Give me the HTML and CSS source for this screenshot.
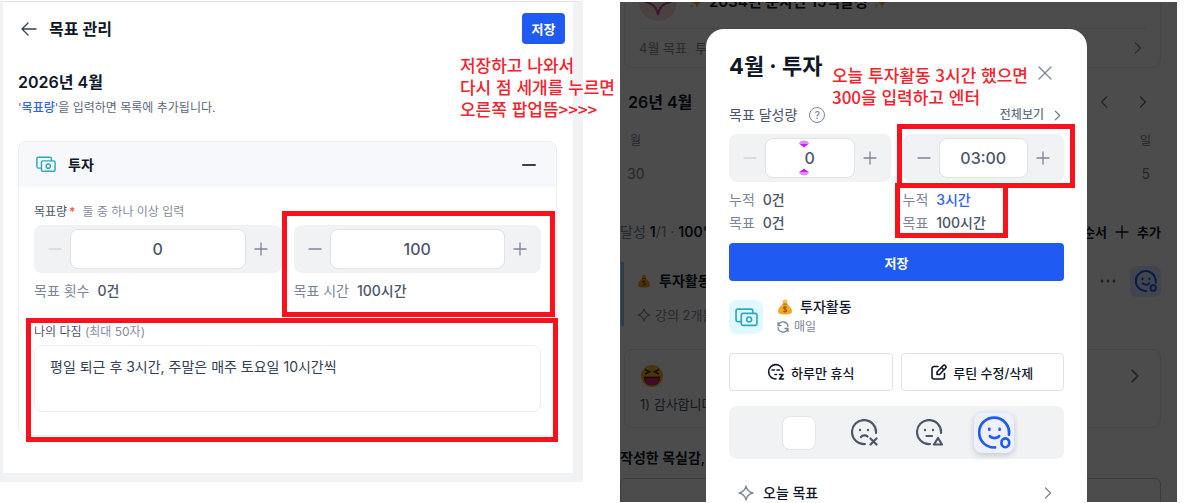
FILE: index.html
```html
<!DOCTYPE html>
<html lang="ko">
<head>
  <meta charset="UTF-8">
  <meta name="viewport" content="width=device-width, initial-scale=1.0">
  <title>목표 관리</title>
  <link rel="stylesheet" href="styles.css">
</head>
<body>
  <!-- shared icons -->
  <svg class="sprite" aria-hidden="true">
    <symbol id="i-minus" viewBox="0 0 14 14"><path d="M1 7h12"/></symbol>
    <symbol id="i-plus" viewBox="0 0 14 14"><path d="M1 7h12M7 1v12"/></symbol>
    <symbol id="i-next" viewBox="0 0 8 12"><path d="M1.500 1l5 5-5 5"/></symbol>
    <symbol id="i-prev" viewBox="0 0 8 12"><path d="M6.500 1l-5 5 5 5"/></symbol>
    <symbol id="i-money" viewBox="0 0 22 18">
      <path d="M6 13H2.500A1.500 1.500 0 0 1 1 11.500v-9A1.500 1.500 0 0 1 2.500 1h13A1.500 1.500 0 0 1 17 2.500V5"/>
      <rect x="6" y="5" width="15" height="11.500" rx="1.500"/>
      <circle cx="13.500" cy="10.800" r="2.300"/>
    </symbol>
    <symbol id="i-star" viewBox="0 0 16 16"><path d="M8 1c.8 4 3 6.200 7 7-4 .8-6.200 3-7 7-.8-4-3-6.200-7-7 4-.8 6.200-3 7-7z"/></symbol>
    <symbol id="i-good" viewBox="0 0 32 32">
      <path d="M30 18A14.500 14.500 0 1 0 16.500 30.500"/>
      <path d="M11.500 19.500c1 2.500 8 2.500 9 0"/>
      <path d="M11 12.500v.8M21 12.500v.8"/>
      <ellipse cx="26.500" cy="26" rx="3.800" ry="4.300"/>
    </symbol>
    <symbol id="i-bag" viewBox="0 0 16 16">
      <path fill="#f5a623" d="M6 5h4c3 2 5 5 5 7.500 0 2-2 3-7 3s-7-1-7-3C1 10 3 7 6 5z"/>
      <path fill="#f7bd4a" d="M5.500 1.500L8 .5l2.500 1L10 5H6z"/>
      <path fill="none" stroke="#a35a16" stroke-width="1.200" d="M5.800 5h4.400M9.800 8.500C8 7.300 6.300 8 6.500 9.200s3.200 1 3.200 2.400-2.200 1.700-3.500.6M8 7v6.500"/>
    </symbol>
    <symbol id="i-spark" viewBox="0 0 14 14">
      <path fill="#f5a623" d="M8 1c.5 3.500 2 5.500 5 6-3 .5-4.500 2.500-5 6-.5-3.500-2-5.500-5-6 3-.5 4.500-2.500 5-6zM2.500 1l.6 1.600 1.400.6-1.400.6-.6 1.600-.6-1.600L.5 3.200l1.400-.6zM2.500 9l.5 1.400 1.300.6-1.300.5-.5 1.500-.5-1.500L.7 11l1.300-.6z"/>
    </symbol>
  </svg>

  <main class="guide">
    <section class="panel">
      <header class="panel-head">
        <button class="icon-btn" aria-label="뒤로">
          <svg class="icon dark" width="16" height="14" viewBox="0 0 16 14"><path d="M15 7H1M7 1L1 7l6 6"/></svg>
        </button>
        <h1>목표 관리</h1>
        <button class="save-small">저장</button>
      </header>

      <div class="panel-body">
        <h2>2026년 4월</h2>
        <p class="desc">'<span>목표량</span>'을 입력하면 목록에 추가됩니다.</p>

        <div class="card">
          <div class="card-head">
            <svg class="icon teal" width="20" height="17"><use href="#i-money"/></svg>
            <h3>투자</h3>
            <button class="icon-btn" aria-label="접기"><svg class="icon dark bold" width="14" height="14"><use href="#i-minus"/></svg></button>
          </div>
          <div class="card-body">
            <p class="label">목표량<b>*</b> <span class="hint">둘 중 하나 이상 입력</span></p>
            <div class="fields">
              <div class="field">
                <div class="stepper">
                  <button aria-label="횟수 감소" disabled><svg class="icon" width="14" height="14"><use href="#i-minus"/></svg></button>
                  <input type="text" aria-label="목표 횟수" value="0">
                  <button aria-label="횟수 증가"><svg class="icon" width="14" height="14"><use href="#i-plus"/></svg></button>
                </div>
                <p class="total">목표 횟수 <strong>0건</strong></p>
              </div>
              <div class="field">
                <div class="stepper">
                  <button aria-label="시간 감소"><svg class="icon" width="14" height="14"><use href="#i-minus"/></svg></button>
                  <input type="text" aria-label="목표 시간" value="100">
                  <button aria-label="시간 증가"><svg class="icon" width="14" height="14"><use href="#i-plus"/></svg></button>
                </div>
                <p class="total">목표 시간 <strong>100시간</strong></p>
                <div class="mark mark-goal"></div>
              </div>
            </div>
            <div class="pledge">
              <label class="label" for="pledge">나의 다짐 <span>(최대 50자)</span></label>
              <textarea id="pledge" maxlength="50">평일 퇴근 후 3시간, 주말은 매주 토요일 10시간씩</textarea>
              <div class="mark mark-pledge"></div>
            </div>
          </div>
        </div>
      </div>
      <p class="note note-save">저장하고 나와서<br>다시 점 세개를 누르면<br>오른쪽 팝업뜸&gt;&gt;&gt;&gt;</p>
    </section>

    <section class="phone">
      <div class="screen">
        <div class="top-card">
          <div class="top-title">
            <span class="badge"><svg class="icon" width="28" height="28"><use href="#i-star"/></svg></span>
            <svg width="14" height="14"><use href="#i-spark"/></svg>
            <strong>2034년 순자산 15억달성</strong>
            <svg width="14" height="14"><use href="#i-spark"/></svg>
          </div>
          <div class="top-goal">
            <span>4월 목표</span><span>투자</span>
            <svg class="icon" width="8" height="12"><use href="#i-next"/></svg>
          </div>
        </div>
        <div class="month">
          <strong>26년 4월</strong>
          <svg class="icon" width="8" height="12"><use href="#i-prev"/></svg>
          <svg class="icon" width="8" height="12"><use href="#i-next"/></svg>
        </div>
        <div class="week"><span>월</span><span>일</span></div>
        <div class="week days"><span>30</span><span>5</span></div>
        <div class="summary">
          <span>달성 <b>1</b>/1 · <b>100%</b></span>
          <span class="tools"><b>순서</b><svg class="icon" width="14" height="14"><use href="#i-plus"/></svg><b>추가</b></span>
        </div>
        <div class="routine">
          <div class="routine-name">
            <svg width="14" height="14"><use href="#i-bag"/></svg>
            <strong>투자활동</strong>
            <svg class="dots" width="16" height="4" viewBox="0 0 16 4"><circle cx="2" cy="2" r="1.500"/><circle cx="8" cy="2" r="1.500"/><circle cx="14" cy="2" r="1.500"/></svg>
            <span class="done"><svg class="icon" width="22" height="22"><use href="#i-good"/></svg></span>
          </div>
          <p><svg class="icon" width="14" height="14"><use href="#i-star"/></svg>강의 2개듣기</p>
        </div>
        <div class="diary">
          <div class="diary-head">
            <svg width="24" height="24" viewBox="0 0 24 24">
              <circle cx="12" cy="12" r="11" fill="#f9b52b"/>
              <path fill="#7a2d12" d="M3.500 12.500h17c0 5-3.500 9-8.500 9s-8.500-4-8.500-9z"/>
              <path fill="#e0218a" d="M4.500 14.500h15c-1 4-4 6.500-7.500 6.500s-6.500-2.500-7.500-6.500z"/>
              <path fill="none" stroke="#5c2a10" stroke-width="1.800" d="M5 5.500l4.500 2.300L5 10M19 5.500l-4.500 2.300L19 10"/>
            </svg>
            <svg class="icon" width="10" height="14" viewBox="0 0 8 12"><use href="#i-next"/></svg>
          </div>
          <p>1) 감사합니다</p>
        </div>
        <strong class="list-title">작성한 목실감,</strong>
        <div class="list"></div>
      </div>

      <div class="overlay">
        <div class="modal" role="dialog" aria-label="4월 투자">
          <header class="modal-head">
            <h2>4월 · 투자</h2>
            <button class="icon-btn" aria-label="닫기"><svg class="icon" width="16" height="16" viewBox="0 0 16 16"><path d="M2 2l12 12M14 2L2 14"/></svg></button>
            <p class="note note-enter">오늘 투자활동 3시간 했으면<br>300을 입력하고 엔터</p>
          </header>
          <div class="modal-sub">
            <span class="sub-title">목표 달성량</span>
            <button class="help" aria-label="도움말">?</button>
            <a class="all" href="#">전체보기 <svg class="icon" width="7" height="11"><use href="#i-next"/></svg></a>
          </div>
          <div class="fields">
            <div class="field">
              <div class="stepper">
                <button aria-label="건수 감소" disabled><svg class="icon" width="14" height="14"><use href="#i-minus"/></svg></button>
                <input type="text" aria-label="건수" value="0">
                <button aria-label="건수 증가"><svg class="icon" width="14" height="14"><use href="#i-plus"/></svg></button>
                <svg class="handles" width="10" height="36" viewBox="0 0 10 36">
                  <path fill="#e08bff" d="M0 4a5 3.500 0 0 1 10 0L5 7z"/><path fill="#c81cf5" d="M1 4h8L5 7.500z"/>
                  <path fill="#e08bff" d="M0 32a5 3.500 0 0 0 10 0L5 29z"/><path fill="#c81cf5" d="M1 32h8L5 28.500z"/>
                </svg>
              </div>
              <div class="totals">
                <p class="total">누적 <strong>0건</strong></p>
                <p class="total">목표 <strong>0건</strong></p>
              </div>
            </div>
            <div class="field">
              <div class="stepper">
                <button aria-label="시간 감소"><svg class="icon" width="14" height="14"><use href="#i-minus"/></svg></button>
                <input type="text" aria-label="시간" value="03:00">
                <button aria-label="시간 증가"><svg class="icon" width="14" height="14"><use href="#i-plus"/></svg></button>
                <div class="mark mark-time"></div>
              </div>
              <div class="totals">
                <p class="total">누적 <strong class="blue">3시간</strong></p>
                <p class="total">목표 <strong>100시간</strong></p>
                <div class="mark mark-total"></div>
              </div>
            </div>
          </div>
          <button class="save">저장</button>

          <div class="activity">
            <span class="activity-icon"><svg class="icon teal" width="23" height="19"><use href="#i-money"/></svg></span>
            <div>
              <p class="activity-name"><svg width="16" height="16"><use href="#i-bag"/></svg>투자활동</p>
              <p class="repeat">
                <svg class="icon" width="12" height="12" viewBox="0 0 12 12"><path d="M1 4.500h3M1 1.500v3M1.300 4.300A5 5 0 0 1 11 5.500M11 7.500H8M11 10.500v-3M10.700 7.700A5 5 0 0 1 1 6.500"/></svg>매일
              </p>
            </div>
          </div>

          <div class="actions">
            <button>
              <svg class="icon" width="18" height="18" viewBox="0 0 18 18"><path d="M16 8A7.200 7.200 0 1 0 9 16M5 7h2.500M10 7h2.500M8 11.500h1.500M12.500 11.500H16l-3.500 4.500h4"/></svg>하루만 휴식
            </button>
            <button>
              <svg class="icon" width="16" height="16" viewBox="0 0 16 16"><path d="M7 2.500H3A2 2 0 0 0 1 4.500v8.500a2 2 0 0 0 2 2h8.500a2 2 0 0 0 2-2V9.500M6 10.500V8l6-6.200a1.600 1.600 0 0 1 2.500 2.400L8.500 10.500zM10.500 3.500L13 6"/></svg>루틴 수정/삭제
            </button>
          </div>

          <div class="moods">
            <button class="mood" aria-label="선택 안함"><span class="blank"></span></button>
            <button class="mood" aria-label="못함">
              <svg class="icon" width="27" height="27" viewBox="0 0 27 27"><path d="M25 14A12 12 0 1 0 14 25M10 18c1.500-2 5-2 6.500-.5M9 10.800v.4M17 10.800v.4M19.500 19.500l6 6M25.500 19.500l-6 6"/></svg>
            </button>
            <button class="mood" aria-label="조금 함">
              <svg class="icon" width="27" height="27" viewBox="0 0 27 27"><path d="M25 14A12 12 0 1 0 14 25M10.500 17h5.500M9 10.800v.4M17 10.800v.4M22 19l-4 6.500h8z"/></svg>
            </button>
            <button class="mood selected" aria-label="완료"><svg class="icon" width="33" height="33"><use href="#i-good"/></svg></button>
          </div>

          <div class="today">
            <svg class="icon" width="16" height="16"><use href="#i-star"/></svg>
            <strong>오늘 목표</strong>
            <svg class="icon" width="8" height="12"><use href="#i-next"/></svg>
          </div>
        </div>
      </div>
    </section>
  </main>
</body>
</html>
```
FILE: styles.css
```css
* {
  box-sizing: border-box;
}
body {
  margin: 0;
  background: #fff;
  color: #101828;
  font-family: Inter, "Noto Sans CJK KR", sans-serif;
  font-size: 14px;
  line-height: 20px;
  overflow: hidden;
}
h1, h2, h3, p {
  margin: 0;
}
button, input, textarea {
  font-family: inherit;
  margin: 0;
}
button {
  padding: 0;
  border: 0;
  background: none;
  color: inherit;
}
.sprite {
  position: absolute;
  width: 0;
  height: 0;
}
.icon {
  fill: none;
  stroke: currentColor;
  stroke-width: 1.3;
  stroke-linecap: round;
  stroke-linejoin: round;
  flex-shrink: 0;
}
.icon.dark {
  color: #344054;
}
.icon.bold {
  stroke-width: 2;
}
.icon.teal {
  color: #2fa9bd;
  stroke-width: 1.6;
}
.icon-btn {
  display: flex;
  color: #7c8599;
}

.guide {
  display: grid;
  grid-template-columns: minmax(0, 583fr) minmax(0, 557fr);
  gap: 37px;
  align-items: start;
  padding: 1px 9px 0 0;
}

/* left: goal form */
.panel {
  position: relative;
  border: solid #f1f2f4;
  border-width: 1px 10px 9px 3px;
  border-top-color: #dfe1e4;
}
.panel-head {
  display: flex;
  align-items: center;
  padding: 11px 8px 0 18px;
}
.panel-head h1 {
  flex: 1;
  margin-left: 12px;
  font-size: 16px;
  font-weight: 600;
}
.save-small {
  width: 43px;
  height: 31px;
  border-radius: 4px;
  background: #1f5af2;
  color: #fff;
  font-size: 13px;
  font-weight: 700;
}
.panel-body {
  padding: 26px 16px 37px 15px;
}
.panel-body h2 {
  font-size: 16px;
  line-height: 24px;
  font-weight: 600;
}
.desc {
  margin: 5px 0 24px;
  font-size: 12px;
  line-height: 18px;
  color: #5d6679;
}
.desc span {
  color: #2f62f5;
  font-weight: 500;
}
.card {
  border: 1px solid #eceef1;
  border-radius: 8px;
}
.card-head {
  display: flex;
  align-items: center;
  height: 45px;
  padding: 0 20px 0 17px;
  border-radius: 8px 8px 0 0;
  background: #f7f8fb;
}
.card-head h3 {
  flex: 1;
  margin-left: 12px;
  font-size: 14px;
  font-weight: 700;
}
.card-body {
  padding: 16px 15px 23px;
}
.label {
  display: block;
  margin-bottom: 4px;
  font-size: 12px;
  line-height: 18px;
  color: #4b556b;
}
.label b {
  margin-left: 2px;
  color: #f04438;
  font-weight: 400;
}
.label span {
  color: #858d9d;
}
.label .hint {
  margin-left: 4px;
}
.fields {
  display: grid;
  grid-template-columns: repeat(2, minmax(0, 1fr));
  gap: 12px;
}
.field {
  position: relative;
}
.stepper {
  position: relative;
  display: flex;
  height: 48px;
  padding: 4px 0;
  border-radius: 8px;
  background: #f1f2f4;
}
.stepper button {
  display: flex;
  flex: 0 0 36px;
  align-items: center;
  justify-content: center;
  padding-left: 6px;
  color: #7c8599;
}
.stepper input + button {
  padding: 0 6px 0 0;
}
.stepper button:disabled {
  color: #d3d7de;
}
.stepper input {
  flex: 1;
  min-width: 0;
  border: 1px solid #dfe2e8;
  border-radius: 8px;
  background: #fff;
  color: #4b556b;
  font-size: 16px;
  font-weight: 500;
  text-align: center;
}
.total {
  color: #7c8599;
}
.total strong {
  margin-left: 4px;
  color: #4b556b;
  font-weight: 500;
}
.total .blue {
  color: #2f62f5;
}
.panel .total {
  margin-top: 8px;
}
.pledge {
  position: relative;
  margin-top: 22px;
}
.pledge textarea {
  display: block;
  width: 100%;
  height: 67px;
  padding: 11px 15px;
  border: 1px solid #eceef1;
  border-radius: 8px;
  color: #344054;
  font-size: 14px;
  line-height: 20px;
  resize: none;
}

/* red annotations */
.mark {
  position: absolute;
  border: 5px solid #f9121c;
  pointer-events: none;
}
.mark-goal {
  inset: -14px -14px -16px -12px;
}
.mark-pledge {
  inset: -5px -17px -30px -8px;
}
.mark-time {
  inset: -10px -11px -6px -6px;
}
.mark-total {
  inset: -5px 56px -4px -8px;
}
.note {
  position: absolute;
  color: #f5222d;
  font-family: "Noto Sans CJK KR", sans-serif;
  font-size: 17px;
  font-weight: 500;
  line-height: 22px;
  white-space: nowrap;
}
.note-save {
  top: 52px;
  right: -42px;
}

/* right: list behind the popup */
.phone {
  position: relative;
  height: calc(100vh - 3px);
  margin-top: 1px;
  overflow: hidden;
  background: #fff;
}
.screen {
  margin-top: -28px;
  padding-right: 16px;
}
.top-card {
  margin-left: 4px;
  padding: 0 14px;
  border: 1px solid #e4e6ea;
  border-radius: 8px;
}
.top-title {
  display: flex;
  align-items: center;
  gap: 6px;
  height: 54px;
  border-bottom: 1px solid #e4e6ea;
}
.top-title strong {
  font-size: 15px;
  font-weight: 600;
}
.badge {
  display: flex;
  align-items: center;
  justify-content: center;
  width: 38px;
  height: 38px;
  margin-right: 6px;
  border-radius: 50%;
  background: #f9dcd6;
  color: #d04a9c;
}
.top-goal {
  display: flex;
  align-items: center;
  gap: 8px;
  height: 38px;
  font-size: 13px;
  color: #858d9d;
}
.top-goal .icon {
  margin: 0 4px 0 auto;
}
.month {
  display: flex;
  align-items: center;
  gap: 31px;
  height: 24px;
  margin: 22px 14px 0 8px;
}
.month strong {
  flex: 1;
  font-size: 16px;
  font-weight: 600;
}
.month .icon, .diary-head .icon {
  color: #667085;
}
.week {
  display: flex;
  justify-content: space-between;
  margin: 17px 10px 0;
  font-size: 12px;
  color: #7c8599;
}
.days {
  margin: 13px 11px 0 7px;
  font-size: 14px;
}
.summary {
  display: flex;
  justify-content: space-between;
  margin-top: 38px;
  color: #7c8599;
}
.summary b {
  color: #101828;
  font-weight: 600;
}
.tools {
  display: flex;
  align-items: center;
  gap: 8px;
  color: #101828;
  font-size: 13px;
}
.routine {
  height: 64px;
  margin: 20px 0 23px 1px;
  padding-left: 13px;
  border-left: 3px solid #8fcdf0;
}
.routine-name {
  display: flex;
  align-items: center;
  gap: 8px;
  height: 38px;
}
.routine-name strong {
  flex: 1;
  font-weight: 600;
}
.dots {
  margin-right: 6px;
  fill: #667085;
}
.done {
  display: flex;
  align-items: center;
  justify-content: center;
  width: 31px;
  height: 31px;
  border-radius: 6px;
  background: #dfe8ff;
  color: #1f5af2;
}
.done .icon {
  stroke-width: 3;
}
.routine p {
  display: flex;
  align-items: center;
  gap: 4px;
  margin-top: 5px;
  font-size: 13px;
  color: #858d9d;
}
.diary {
  height: 79px;
  margin-left: 4px;
  padding: 14px 15px;
  border: 1px solid #e4e6ea;
  border-radius: 8px;
}
.diary-head {
  display: flex;
  align-items: center;
  justify-content: space-between;
  padding-right: 5px;
}
.diary p {
  margin-top: 6px;
  font-size: 13px;
  color: #475467;
}
.list-title {
  display: block;
  margin: 20px 0 10px;
  font-weight: 600;
}
.list {
  height: 80px;
  border: 1px solid #c5c9d0;
  border-radius: 6px;
}

/* popup */
.overlay {
  position: absolute;
  inset: 0;
  display: flex;
  padding: 27px 90px 0 86px;
  background: rgba(0, 0, 0, 0.7);
}
.modal {
  flex: 1;
  min-width: 0;
  padding: 22px 23px 0;
  border-radius: 18px 18px 0 0;
  background: #fff;
}
.modal-head {
  position: relative;
  display: flex;
  align-items: flex-end;
  justify-content: space-between;
  height: 30px;
  padding-right: 11px;
}
.modal-head h2 {
  font-size: 22px;
  line-height: 30px;
  font-weight: 700;
}
.note-enter {
  top: 13px;
  right: 36px;
}
.modal-sub {
  display: flex;
  align-items: center;
  margin: 24px 0 9px;
}
.sub-title {
  color: #4b556b;
}
.help {
  width: 16px;
  height: 16px;
  margin-left: 12px;
  border: 1px solid #7c8599;
  border-radius: 50%;
  color: #667085;
  font-size: 10px;
  line-height: 14px;
}
.all {
  display: flex;
  align-items: center;
  gap: 10px;
  margin: 0 3px 0 auto;
  color: #667085;
  font-size: 12px;
  font-weight: 500;
  text-decoration: none;
}
.handles {
  position: absolute;
  top: 6px;
  left: 70px;
}
.totals {
  position: relative;
  margin-top: 6px;
  line-height: 23px;
}
.save {
  display: block;
  width: 100%;
  height: 38px;
  margin-top: 9px;
  border-radius: 4px;
  background: #1f5af2;
  color: #fff;
  font-size: 13px;
  font-weight: 700;
}
.activity {
  display: flex;
  align-items: center;
  gap: 14px;
  margin: 16px 0;
}
.activity-icon {
  display: flex;
  align-items: center;
  justify-content: center;
  width: 34px;
  height: 34px;
  border-radius: 8px;
  background: #e0f9fe;
}
.activity-name, .repeat {
  display: flex;
  align-items: center;
}
.activity-name {
  gap: 7px;
  font-weight: 500;
}
.repeat {
  gap: 5px;
  color: #7c8599;
  font-size: 12px;
}
.actions {
  display: grid;
  grid-template-columns: 1fr 1fr;
  gap: 8px;
}
.actions button {
  display: flex;
  align-items: center;
  justify-content: center;
  gap: 6px;
  height: 38px;
  border: 1px solid #dfe2e8;
  border-radius: 4px;
  font-size: 13px;
  font-weight: 500;
}
.actions .icon {
  stroke-width: 1.6;
}
.moods {
  display: flex;
  align-items: center;
  justify-content: center;
  gap: 25px;
  height: 53px;
  margin: 15px 0 24px;
  border-radius: 8px;
  background: #f1f2f4;
}
.mood {
  display: flex;
  align-items: center;
  justify-content: center;
  width: 40px;
  height: 40px;
  border-radius: 8px;
  color: #4b556b;
}
.mood .icon {
  stroke-width: 2.2;
}
.blank {
  width: 34px;
  height: 34px;
  border: 1px solid #e4e6ea;
  border-radius: 8px;
  background: #fff;
}
.mood.selected {
  background: #ecf0ff;
  color: #1f5af2;
  box-shadow: 0 2px 6px rgba(16, 24, 40, 0.2);
}
.mood.selected .icon {
  stroke-width: 2.6;
}
.today {
  display: flex;
  align-items: center;
  gap: 9px;
  padding: 0 12px 0 9px;
  color: #7c8599;
}
.today strong {
  flex: 1;
  color: #101828;
  font-weight: 500;
}
```
